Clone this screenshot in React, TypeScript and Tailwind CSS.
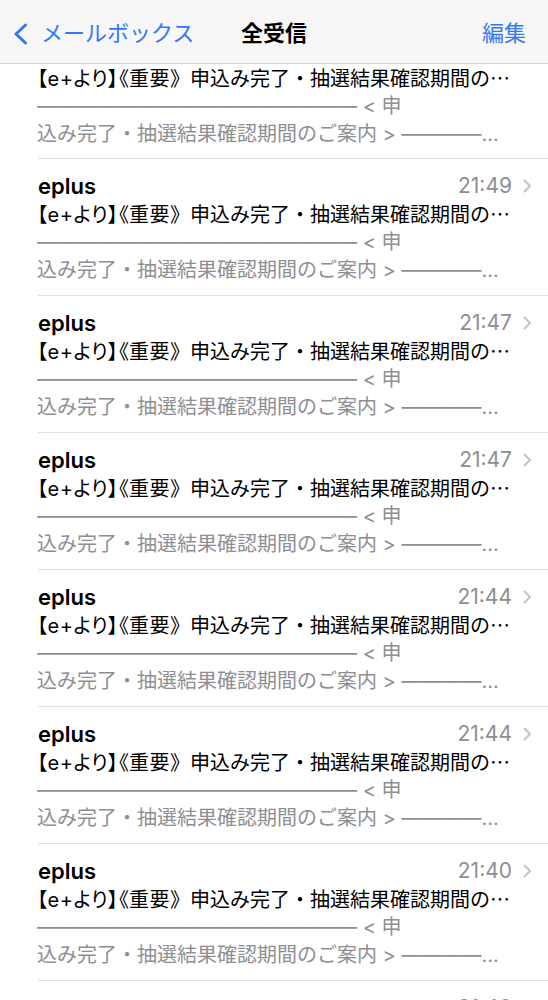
const messages = [
  { from: 'eplus', time: '21:49' },
  { from: 'eplus', time: '21:47' },
  { from: 'eplus', time: '21:47' },
  { from: 'eplus', time: '21:44' },
  { from: 'eplus', time: '21:44' },
  { from: 'eplus', time: '21:40' },
  { from: 'eplus', time: '21:40' },
];

const dashes = '――――――――――――――――';

function Chevron() {
  return (
    <svg width="9" height="14" viewBox="0 0 9 14" fill="none" className="shrink-0">
      <path d="M1.5 1.5 7 7l-5.5 5.5" stroke="#c4c4c7" strokeWidth="2" strokeLinecap="round" strokeLinejoin="round" />
    </svg>
  );
}

function Body() {
  return (
    <>
      <p className="h-[28px] overflow-hidden whitespace-nowrap text-[20px] leading-[28px] text-black">
        <span className="tracking-[0.5px] [font-feature-settings:'palt']">【e+より】《重要</span>
        <span>》申込み完了・抽選結果確認期間の</span>
        <span className="[font-family:'Noto_Sans_CJK_JP',sans-serif]">…</span>
      </p>
      <p className="h-[28px] overflow-hidden whitespace-nowrap text-[20px] leading-[28px] text-[#8e8e93]">
        {dashes} &lt; 申
      </p>
      <p className="h-[28px] truncate pr-[6px] text-[20px] leading-[28px] text-[#8e8e93]">
        込み完了・抽選結果確認期間のご案内 &gt; {dashes}
      </p>
    </>
  );
}

function MessageRow({ from, time }: { from: string; time: string }) {
  return (
    <li className="ml-[38px] border-t border-[#e2e2e4] pr-[16px] pt-[13px] pb-[11px]">
      <div className="flex h-[28px] items-center">
        <span className="flex-1 text-[22px] font-semibold leading-[28px] text-black">{from}</span>
        <span className="text-[21px] leading-[28px] text-[#8e8e93]">{time}</span>
        <span className="ml-[11px]">
          <Chevron />
        </span>
      </div>
      <div className="-ml-[1px] pr-[20px]">
        <Body />
      </div>
    </li>
  );
}

export default function App() {
  return (
    <div className="h-[1000px] w-full overflow-hidden bg-white [font-family:Inter,'Noto_Sans_CJK_JP',sans-serif]">
      <header className="grid h-[64px] grid-cols-[1fr_auto_1fr] items-center border-b border-[#d6d6d8] bg-[#f7f7f7] pt-[4px]">
        <div className="flex items-center gap-[13px] pl-[13px] text-[22px] text-[#3478f6]">
          <svg width="15" height="22" viewBox="0 0 15 22" fill="none">
            <path d="M12.5 2 3 11l9.5 9" stroke="#3478f6" strokeWidth="3" strokeLinecap="round" strokeLinejoin="round" />
          </svg>
          <span>メールボックス</span>
        </div>
        <h1 className="text-[22px] font-bold text-black">全受信</h1>
        <div className="pr-[22px] text-right text-[22px] text-[#3478f6]">編集</div>
      </header>

      <ul>
        <li className="ml-[38px] pr-[16px] pb-[10px]">
          <div className="-ml-[1px] pr-[20px]">
            <Body />
          </div>
        </li>
        {messages.map((m, i) => (
          <MessageRow key={i} from={m.from} time={m.time} />
        ))}
      </ul>
    </div>
  );
}
